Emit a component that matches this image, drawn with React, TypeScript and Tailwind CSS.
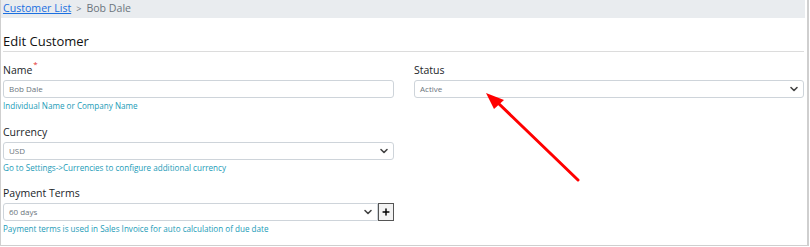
import { ChevronDown, Plus } from "lucide-react";
import type { ReactNode } from "react";

const font = { fontFamily: '"Open Sans", "Noto Sans", sans-serif' };

/* ------------------------------------------------------------------ Field */
function Field({ label, required, help, children }: { label: string; required?: boolean; help?: string; children: ReactNode }) {
  return (
    <div className="flex flex-col">
      <label className="relative h-[14px] text-[10.5px] leading-[14px] text-[#212529]">
        {label}
        {required && <span className="absolute top-[-3px] ml-[1px] text-[8px] leading-none text-[#e3342f]">*</span>}
      </label>
      <div className="mt-[3px]">{children}</div>
      {help && <p className="mt-[1px] h-[13px] text-[8.1px] leading-[13px] text-[#1b9bb7]">{help}</p>}
    </div>
  );
}

const boxClass =
  "flex h-[18px] items-center rounded-[3px] border border-[#ced4da] bg-white px-[5px] text-[8px] text-[#6c757d]";

function Select({ value, className = "" }: { value: string; className?: string }) {
  return (
    <div className={`${boxClass} justify-between ${className}`}>
      <span>{value}</span>
      <ChevronDown size={12} strokeWidth={3.2} className="-mr-[2px] text-[#444]" />
    </div>
  );
}

export default function App() {
  return (
    <div style={font} className="relative h-[246px] w-[809px] border-b border-l border-r-2 border-[#cfcfcf] bg-white">
      {/* breadcrumb */}
      <div className="mr-[2px] flex h-[18px] items-center bg-[#e9ecef] pl-[2px] text-[10.6px]">
        <a className="text-[#1a6fe0] underline">Customer List</a>
        <span className="mx-[5px] text-[9px] text-[#6c757d]">&gt;</span>
        <span className="text-[#6c757d]">Bob Dale</span>
      </div>

      <div className="px-[2px] pr-[3px]">
        <h2 className="mt-[14px] h-[18px] text-[13px] font-medium leading-[18px] text-[#111]">Edit Customer</h2>
        <div className="mt-[1px] border-t border-[#dcdcdc]" />

        <div className="mt-[11px] grid grid-cols-[391px_1fr] gap-x-[20px]">
          <Field label="Name" required help="Individual Name or Company Name">
            <div className={boxClass}>Bob Dale</div>
          </Field>
          <Field label="Status">
            <Select value="Active" />
          </Field>
        </div>

        <div className="mt-[13px] w-[391px]">
          <Field label="Currency" help="Go to Settings->Currencies to configure additional currency">
            <Select value="USD" />
          </Field>
        </div>

        <div className="mt-[12px] w-[391px]">
          <Field label="Payment Terms" help="Payment terms is used in Sales Invoice for auto calculation of due date">
            <div className="flex">
              <Select value="60 days" className="flex-1 rounded-r-none" />
              <button className="grid h-[18px] w-[16px] place-items-center border border-[#555] bg-[#f3f3f3]">
                <Plus size={10} strokeWidth={3.5} className="text-black" />
              </button>
            </div>
          </Field>
        </div>
      </div>

      {/* annotation arrow */}
      <svg className="pointer-events-none absolute left-0 top-0" width="810" height="247" viewBox="0 0 810 247">
        <line x1="577" y1="180" x2="496" y2="102" stroke="#ff0000" strokeWidth="3" strokeLinecap="round" />
        <polygon points="485,93 503,100 493,109" fill="#ff0000" />
      </svg>
    </div>
  );
}
